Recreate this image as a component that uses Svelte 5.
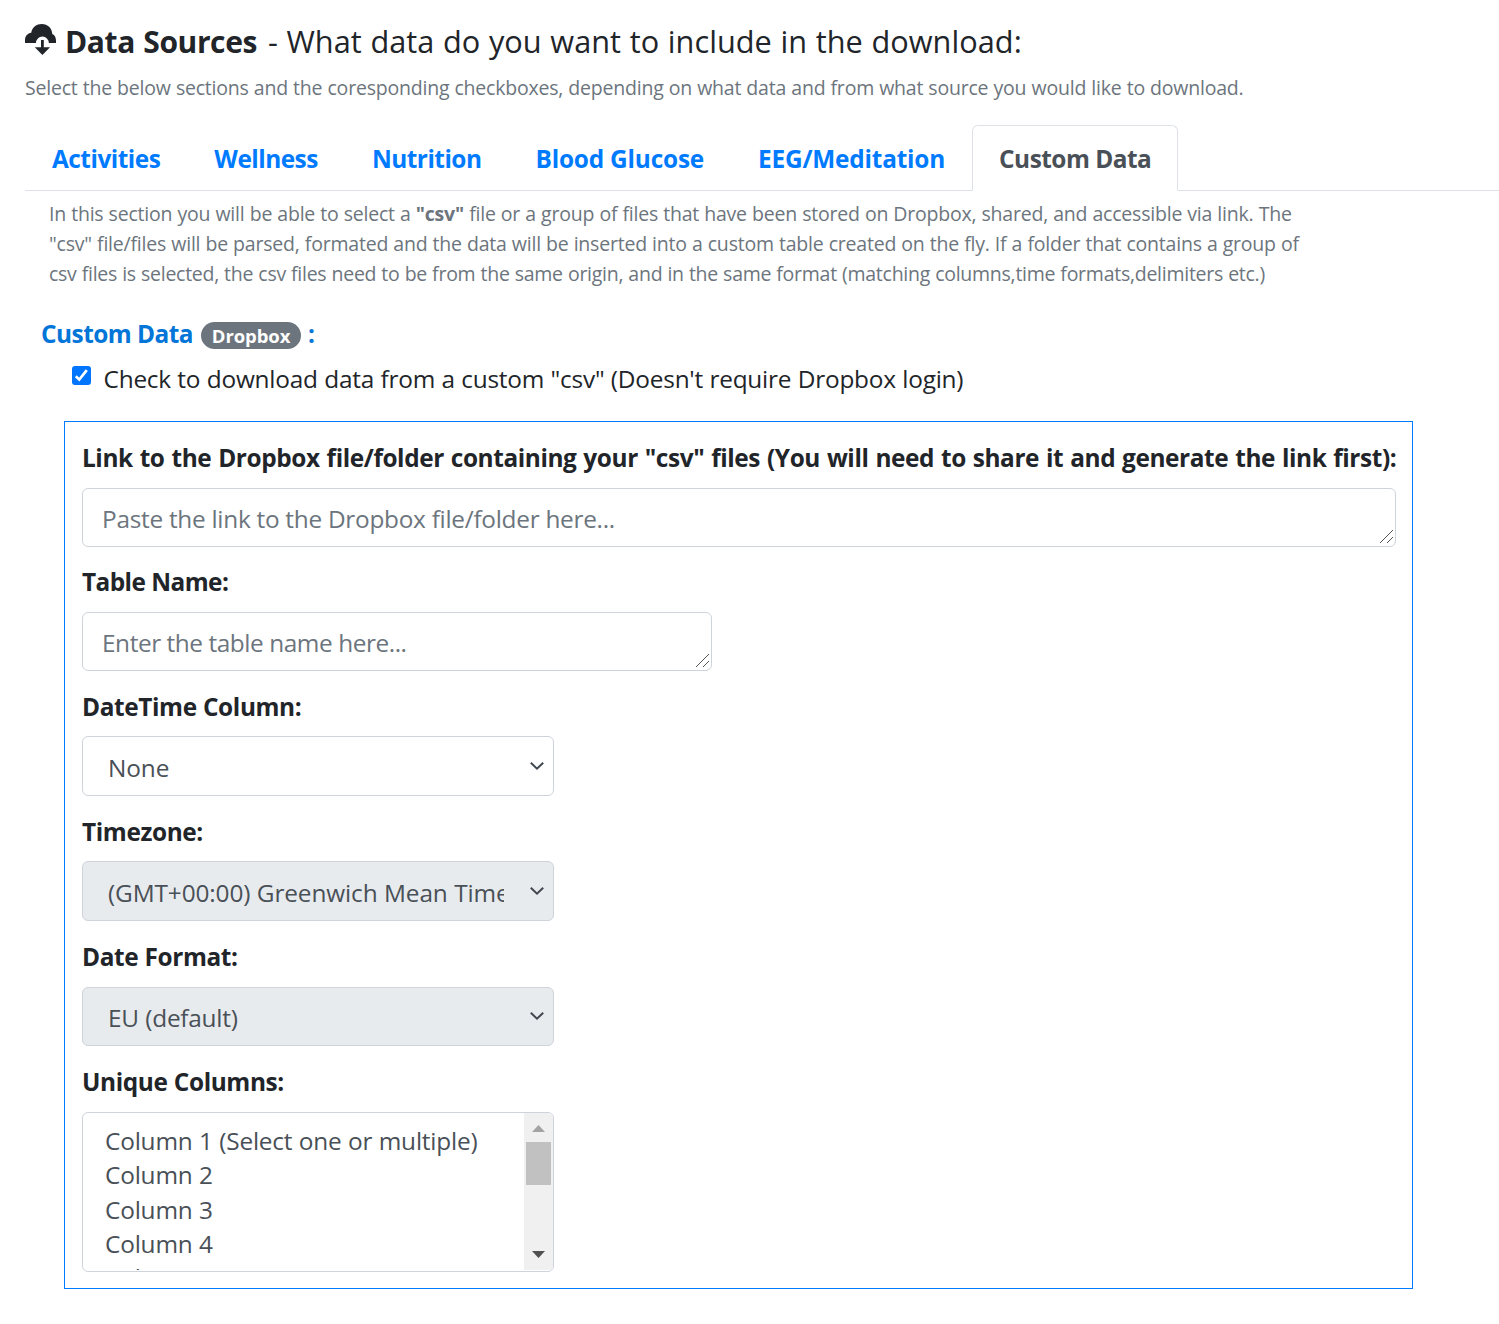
<script>
  const tabs = ['Activities', 'Wellness', 'Nutrition', 'Blood Glucose', 'EEG/Meditation', 'Custom Data'];
  const columns = ['Column 1 (Select one or multiple)', 'Column 2', 'Column 3', 'Column 4', 'Column 5'];
  let active = $state('Custom Data');
  let checked = $state(true);
</script>

{#snippet grip()}
  <svg class="grip" viewBox="0 0 14 14" width="14" height="14" shape-rendering="crispEdges">
    <path d="M0.5 13.5L13.5 0.5M7.5 13.5L13.5 7.5" stroke="#555" stroke-width="1" fill="none" />
  </svg>
{/snippet}

{#snippet picker(text, disabled)}
  <div class="picker" class:disabled>
    <span class="value">{text}</span>
    <svg class="chevron" viewBox="0 0 16 10" width="16" height="10">
      <path d="M1.8 1.8L8 7.7L14.2 1.8" fill="none" stroke="#40474e" stroke-width="2" />
    </svg>
  </div>
{/snippet}

<main>
  <h1>
    <svg class="cloud" viewBox="0 0 31 31" width="31" height="31" fill="#212529">
      <path d="M0 19V16C0 12 2.8 9.3 6.2 8.8C7.2 3.2 11.5 0 16.8 0C22.8 0 27 4.2 27.3 10C29.8 11 31 13.6 31 16.5V19H23.8A6.4 6.4 0 0 0 11 19Z" />
      <path d="M16 16H18.8V23.3H25L17.4 31L9.8 23.3H16Z" />
    </svg>
    <b>Data Sources</b>
    <span>- What data do you want to include in the download:</span>
  </h1>
  <p class="lead">Select the below sections and the coresponding checkboxes, depending on what data and from what source you would like to download.</p>

  <nav>
    {#each tabs as tab}
      <button class="tab" class:active={tab === active} onclick={() => (active = tab)}>{tab}</button>
    {/each}
  </nav>

  <div class="about">
    <div>In this section you will be able to select a <b>"csv"</b> file or a group of files that have been stored on Dropbox, shared, and accessible via link. The</div>
    <div>"csv" file/files will be parsed, formated and the data will be inserted into a custom table created on the fly. If a folder that contains a group of</div>
    <div class="tight">csv files is selected, the csv files need to be from the same origin, and in the same format (matching columns,time formats,delimiters etc.)</div>
  </div>

  <h2><span>Custom Data</span><span class="badge">Dropbox</span><span>:</span></h2>

  <label class="check">
    <input type="checkbox" bind:checked />
    <span class="mark" class:on={checked}>
      <svg viewBox="0 0 19 19" width="19" height="19"><path d="M3.8 10.2L7.3 13.6L14.8 4.2" fill="none" stroke="#fff" stroke-width="2.7" /></svg>
    </span>
    <span>Check to download data from a custom "csv" (Doesn't require Dropbox login)</span>
  </label>

  <section>
    <div class="field">
      <div class="name link">Link to the Dropbox file/folder containing your "csv" files (You will need to share it and generate the link first):</div>
      <div class="area">
        <textarea rows="1" placeholder="Paste the link to the Dropbox file/folder here..."></textarea>
        {@render grip()}
      </div>
    </div>
    <div class="field">
      <div class="name table">Table Name:</div>
      <div class="area short">
        <textarea rows="1" placeholder="Enter the table name here..."></textarea>
        {@render grip()}
      </div>
    </div>
    <div class="field">
      <div class="name">DateTime Column:</div>
      {@render picker('None', false)}
    </div>
    <div class="field">
      <div class="name">Timezone:</div>
      {@render picker('(GMT+00:00) Greenwich Mean Time', true)}
    </div>
    <div class="field low">
      <div class="name">Date Format:</div>
      {@render picker('EU (default)', true)}
    </div>
    <div class="field low">
      <div class="name">Unique Columns:</div>
      <div class="list">
        <ul>
          {#each columns as column}
            <li>{column}</li>
          {/each}
        </ul>
        <div class="bar">
          <svg viewBox="0 0 13 7" width="13" height="7"><path d="M0 7L6.5 0L13 7Z" fill="#a3a3a3" /></svg>
          <div class="thumb"></div>
          <svg class="down" viewBox="0 0 13 7" width="13" height="7"><path d="M0 0L6.5 7L13 0Z" fill="#505050" /></svg>
        </div>
      </div>
    </div>
  </section>
</main>

<style>
  :global(body) { background: #fff; }
  main {
    box-sizing: border-box;
    width: 1499px;
    height: 1324px;
    padding: 21px 0 0 25px;
    overflow: hidden;
    font: 24.4px 'Open Sans', 'Noto Sans', sans-serif;
    letter-spacing: -0.2px;
    word-spacing: 0.3px;
    color: #212529;
    white-space: nowrap;
  }
  h1, h2, p, ul { margin: 0; padding: 0; }
  h1 {
    display: flex;
    height: 40px;
    font-size: 30.7px;
    font-weight: 400;
    line-height: 40px;
    letter-spacing: 0.04px;
    word-spacing: 0.6px;
  }
  .cloud { margin: 3px 8px 0 0; }
  h1 b { margin: 0 11px 0 1px; font-size: 30px; line-height: 42px; letter-spacing: -0.4px; word-spacing: 1px; }
  .lead {
    margin-top: 12px;
    font-size: 19.5px;
    line-height: 30px;
    letter-spacing: -0.207px;
    color: #6c757d;
  }
  nav {
    display: flex;
    height: 65px;
    margin-top: 22px;
    border-bottom: 1px solid #dee2e6;
  }
  .tab {
    box-sizing: border-box;
    height: 66px;
    padding: 0 26px;
    border: 1px solid transparent;
    border-radius: 6px 6px 0 0;
    background: none;
    font: inherit;
    font-weight: 700;
    line-height: 65px;
    letter-spacing: -0.5px;
    word-spacing: 0;
    color: #007bff;
    cursor: pointer;
  }
  .tab:nth-child(4), .tab:nth-child(5) { letter-spacing: -0.2px; }
  .tab.active {
    border-color: #dee2e6 #dee2e6 #fff;
    background: #fff;
    color: #495057;
  }
  .about {
    padding: 8px 0 0 24px;
    font-size: 19.5px;
    line-height: 30px;
    letter-spacing: -0.207px;
    color: #6c757d;
  }
  .about .tight { letter-spacing: -0.257px; }
  h2 {
    display: flex;
    align-items: flex-start;
    height: 38px;
    margin: 25px 0 0 16px;
    font-size: 24.4px;
    line-height: 40px;
    letter-spacing: -0.52px;
    word-spacing: 0;
    color: #0275d8;
  }
  .badge {
    box-sizing: border-box;
    width: 100px;
    height: 27px;
    margin: 8px 7px 0 8px;
    border-radius: 14px;
    background: #6c757d;
    font-size: 18.5px;
    line-height: 28px;
    letter-spacing: -0.1px;
    text-align: center;
    color: #fff;
  }
  .check { display: flex; height: 38px; margin: 7px 0 0 47px; line-height: 40px; letter-spacing: -0.215px; }
  .check input { position: absolute; opacity: 0; }
  .mark {
    width: 19px;
    height: 19px;
    margin: 7px 12.5px 0 0;
    border-radius: 3px;
    background: #ccc;
  }
  .mark.on { background: #0075ff; }
  .mark svg { display: block; }
  section {
    box-sizing: border-box;
    width: 1349px;
    height: 868px;
    margin: 24px 0 0 39px;
    padding: 16px 16px 0 17px;
    border: 1px solid #007bff;
  }
  .field { margin-bottom: 15px; }
  .name {
    height: 40px;
    margin: 0 0 10px;
    font-weight: 700;
    line-height: 42px;
    letter-spacing: -0.38px;
  }
  .name.link { line-height: 40px; letter-spacing: -0.407px; word-spacing: 1px; }
  .name.table { line-height: 40px; letter-spacing: -0.58px; }
  .low .name { margin-bottom: 11px; }
  .low .picker { height: 59px; padding-top: 2px; }
  .area { position: relative; height: 59px; }
  .area.short { width: 630px; }
  textarea {
    display: block;
    box-sizing: border-box;
    width: 100%;
    height: 100%;
    padding: 11px 19px 0;
    border: 1px solid #ced4da;
    border-radius: 6px;
    background: #fff;
    font: inherit;
    line-height: 37px;
    letter-spacing: -0.28px;
    word-spacing: 0;
    color: #495057;
    resize: none;
    overflow: hidden;
  }
  .short textarea { letter-spacing: -0.44px; }
  textarea::placeholder { color: #6c757d; opacity: 1; }
  .grip { position: absolute; right: 3px; bottom: 3px; }
  .picker {
    display: flex;
    box-sizing: border-box;
    width: 472px;
    height: 60px;
    padding: 3px 8px 0 25px;
    border: 1px solid #ced4da;
    border-radius: 6px;
    line-height: 55px;
    color: #495057;
  }
  .picker.disabled { background: #e8ebee; }
  .value { flex: none; width: 396px; height: 55px; overflow: hidden; letter-spacing: -0.12px; }
  .low .value { letter-spacing: -0.24px; }
  .chevron { margin: 21px 0 0 auto; }
  .list {
    display: flex;
    box-sizing: border-box;
    width: 472px;
    height: 160px;
    padding-bottom: 1px;
    border: 1px solid #ced4da;
    border-radius: 6px;
    overflow: hidden;
    color: #495057;
  }
  ul { flex: 1; padding: 11px 0 0 22px; list-style: none; overflow: hidden; }
  li { height: 34.4px; line-height: 34.4px; letter-spacing: -0.19px; }
  li:last-child { margin-top: -1px; }
  .bar {
    display: flex;
    flex-direction: column;
    align-items: center;
    box-sizing: border-box;
    width: 29px;
    padding: 12px 0;
    background: #f0f0f0;
  }
  .thumb { width: 25px; height: 43px; margin-top: 10px; background: #c1c1c1; }
  .down { margin-top: auto; }
</style>
